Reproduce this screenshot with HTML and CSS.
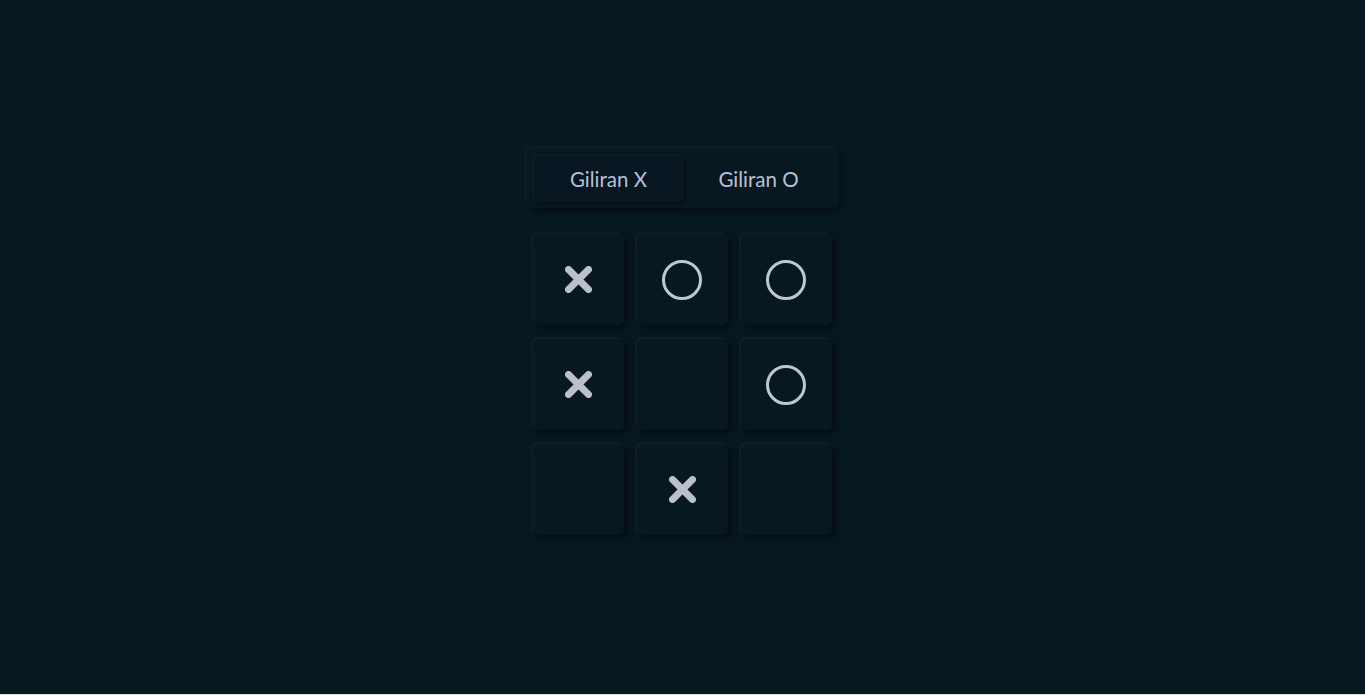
FILE: index.html
```html
<!DOCTYPE html>
<html lang="id">
<head>
<meta charset="utf-8">
<title>Tic Tac Toe</title>
<link rel="stylesheet" href="styles.css">
</head>
<body>
<main class="game">
  <div class="turns">
    <div class="turn active">Giliran X</div>
    <div class="turn">Giliran O</div>
  </div>
  <div class="board">
    <div class="cell"><svg class="mark-x" viewBox="0 0 27 27"><path d="M3.5 3.5 L23.5 23.5 M23.5 3.5 L3.5 23.5"/></svg></div>
    <div class="cell"><svg class="mark-o" viewBox="0 0 40 40"><circle cx="20" cy="20" r="18.5"/></svg></div>
    <div class="cell"><svg class="mark-o" viewBox="0 0 40 40"><circle cx="20" cy="20" r="18.5"/></svg></div>
    <div class="cell"><svg class="mark-x" viewBox="0 0 27 27"><path d="M3.5 3.5 L23.5 23.5 M23.5 3.5 L3.5 23.5"/></svg></div>
    <div class="cell"></div>
    <div class="cell"><svg class="mark-o" viewBox="0 0 40 40"><circle cx="20" cy="20" r="18.5"/></svg></div>
    <div class="cell"></div>
    <div class="cell"><svg class="mark-x" viewBox="0 0 27 27"><path d="M3.5 3.5 L23.5 23.5 M23.5 3.5 L3.5 23.5"/></svg></div>
    <div class="cell"></div>
  </div>
</main>
</body>
</html>
```
FILE: styles.css
```css
html {
  background: #dcdcdc;
  margin: 0;
  padding: 0;
}
body {
  margin: 0;
  height: 694px;
  background: #081820;
  font-family: "Lato", "Noto Sans", sans-serif;
  overflow: hidden;
}
.game {
  display: flex;
  flex-direction: column;
  align-items: center;
  padding-top: 148px;
  padding-right: 1px;
}
.turns {
  display: flex;
  width: 313px;
  height: 60px;
  box-sizing: border-box;
  padding: 8px 5px 6px 8px;
  border-radius: 5px;
  background: #081820;
  box-shadow: 3px 3px 6px rgba(0, 0, 0, 0.45), -1px -1px 2px rgba(255, 255, 255, 0.06);
}
.turn {
  flex: 1;
  display: flex;
  align-items: center;
  justify-content: center;
  color: #b7c2d6;
  font-size: 20.5px;
  border-radius: 5px;
}
.turn.active {
  background: #071620;
  box-shadow: 2px 2px 4px rgba(0, 0, 0, 0.45), -1px -1px 2px rgba(255, 255, 255, 0.06);
}
.board {
  display: grid;
  grid-template-columns: repeat(3, 91px);
  grid-auto-rows: 91px;
  column-gap: 13px;
  row-gap: 14px;
  margin-top: 26px;
}
.cell {
  display: flex;
  align-items: center;
  justify-content: center;
  background: #081820;
  border-radius: 5px;
  box-shadow: 3px 3px 6px rgba(0, 0, 0, 0.5), -1px -1px 2px rgba(255, 255, 255, 0.07);
}
.mark-x {
  width: 27px;
  height: 27px;
  fill: none;
  stroke: #bac0cd;
  stroke-width: 7;
  stroke-linecap: round;
}
.mark-o {
  width: 40px;
  height: 40px;
  fill: none;
  stroke: #c0c6d2;
  stroke-width: 3;
}
```
